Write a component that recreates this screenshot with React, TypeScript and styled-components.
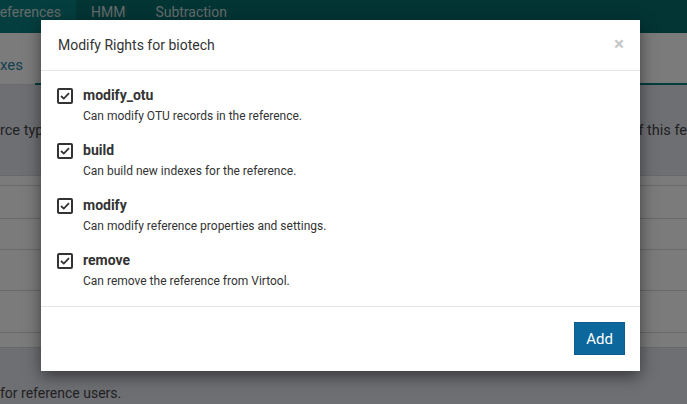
import React from "react";
import styled, { createGlobalStyle } from "styled-components";

const Global = createGlobalStyle`
  html, body { margin: 0; padding: 0; }
  body { font-family: Roboto, "Noto Sans", sans-serif; background: #f6f6f6; overflow: hidden; }
  #root { width: 687px; height: 404px; position: relative; overflow: hidden; }
`;

const Page = styled.div`
  display: flex;
  flex-direction: column;
  height: 404px;
  background: #f6f6f6;
`;

const Navbar = styled.div`
  height: 33px;
  background: #066a6a;
  display: flex;
  align-items: stretch;
`;

const NavItem = styled.div<{ $active?: boolean }>`
  display: flex;
  align-items: flex-start;
  padding: 2px 15px 0;
  line-height: 20px;
  font-size: 14px;
  color: #c9d6d6;
  background: ${(p) => (p.$active ? "#0b7d7d" : "transparent")};
  margin-left: ${(p) => (p.$active ? "-24px" : "0")};
`;

const Tabs = styled.div`
  height: 52px;
  display: flex;
  align-items: flex-end;
  border-bottom: 1px solid #d6d6d6;
  box-sizing: border-box;
`;

const TabLink = styled.div<{ $active?: boolean }>`
  height: 37px;
  font-size: 15px;
  color: #2a7fa3;
  display: flex;
  align-items: center;
  padding-right: ${(p) => (p.$active ? "0" : "12px")};
  flex: ${(p) => (p.$active ? "1" : "none")};
  border-bottom: ${(p) => (p.$active ? "2px solid #077a79" : "2px solid transparent")};
  margin-bottom: -1px;
`;

const Panel = styled.div`
  height: 90px;
  background: #dcdee6;
  display: flex;
  justify-content: space-between;
  align-items: center;
  font-size: 14.5px;
  color: #444;
`;

const Row = styled.div<{ $h: number }>`
  height: ${(p) => p.$h}px;
  border-top: 1px solid #d0d0d0;
  box-sizing: border-box;
`;

const Footer = styled.div`
  flex: 1;
  background: #dcdee6;
  border-top: 1px solid #d0d0d0;
  display: flex;
  align-items: flex-end;
  padding-bottom: 3px;
  font-size: 14px;
  color: #444;
`;

const Backdrop = styled.div`
  position: absolute;
  inset: 0;
  background: rgba(0, 0, 0, 0.5);
`;

const Modal = styled.div`
  position: absolute;
  left: 41px;
  top: 20px;
  width: 599px;
  background: #fff;
  box-shadow: 0 5px 15px rgba(0, 0, 0, 0.5);
  display: flex;
  flex-direction: column;
`;

const Header = styled.div`
  height: 50px;
  display: flex;
  align-items: center;
  justify-content: space-between;
  padding: 0 16px 0 17px;
  border-bottom: 1px solid #e5e5e5;
`;

const Title = styled.div`
  font-size: 14px;
  color: #333;
`;

const Close = styled.div`
  font-size: 19px;
  font-weight: 700;
  color: #c8c8c8;
  line-height: 1;
  margin-top: -4px;
`;

const Body = styled.div`
  padding: 14px 16px 16px;
  display: flex;
  flex-direction: column;
  gap: 15px;
  border-bottom: 1px solid #e5e5e5;
`;

const Item = styled.div`
  display: flex;
  gap: 10px;
`;

const Box = styled.div`
  width: 16px;
  height: 16px;
  box-sizing: border-box;
  border: 2px solid #333;
  border-radius: 2px;
  margin-top: 3px;
  display: flex;
  align-items: center;
  justify-content: center;
  flex: none;
`;

const Texts = styled.div`
  display: flex;
  flex-direction: column;
`;

const Label = styled.div`
  font-size: 14px;
  font-weight: 700;
  color: #333;
  line-height: 20px;
`;

const Desc = styled.div`
  font-size: 12px;
  color: #333;
  line-height: 18px;
  margin-top: 2px;
`;

const ModalFooter = styled.div`
  height: 64px;
  display: flex;
  justify-content: flex-end;
  align-items: flex-start;
  padding: 15px 15px 0;
  box-sizing: border-box;
`;

const Button = styled.button`
  width: 51px;
  height: 33px;
  background: #0b679c;
  border: 1px solid #0a5d8c;
  color: #fff;
  font-family: Roboto, sans-serif;
  font-size: 15px;
  padding: 0;
`;

const rights = [
  { name: "modify_otu", desc: "Can modify OTU records in the reference." },
  { name: "build", desc: "Can build new indexes for the reference." },
  { name: "modify", desc: "Can modify reference properties and settings." },
  { name: "remove", desc: "Can remove the reference from Virtool." },
];

const Check = () => (
  <svg width="10" height="8" viewBox="0 0 10 8">
    <path d="M1 4 L3.8 6.6 L9 1.2" fill="none" stroke="#333" strokeWidth="1.8" />
  </svg>
);

export default function App() {
  return (
    <>
      <Global />
      <Page>
        <Navbar>
          <NavItem $active>References</NavItem>
          <NavItem>HMM</NavItem>
          <NavItem>Subtraction</NavItem>
        </Navbar>
        <Tabs>
          <TabLink>xes</TabLink>
          <TabLink $active />
        </Tabs>
        <Panel>
          <span>rce type</span>
          <span>f this fe</span>
        </Panel>
        <Row $h={10} />
        <Row $h={33} />
        <Row $h={31} />
        <Row $h={41} />
        <Row $h={42} />
        <Row $h={15} />
        <Footer>for reference users.</Footer>
      </Page>
      <Backdrop />
      <Modal>
        <Header>
          <Title>Modify Rights for biotech</Title>
          <Close>×</Close>
        </Header>
        <Body>
          {rights.map((r) => (
            <Item key={r.name}>
              <Box>
                <Check />
              </Box>
              <Texts>
                <Label>{r.name}</Label>
                <Desc>{r.desc}</Desc>
              </Texts>
            </Item>
          ))}
        </Body>
        <ModalFooter>
          <Button>Add</Button>
        </ModalFooter>
      </Modal>
    </>
  );
}
